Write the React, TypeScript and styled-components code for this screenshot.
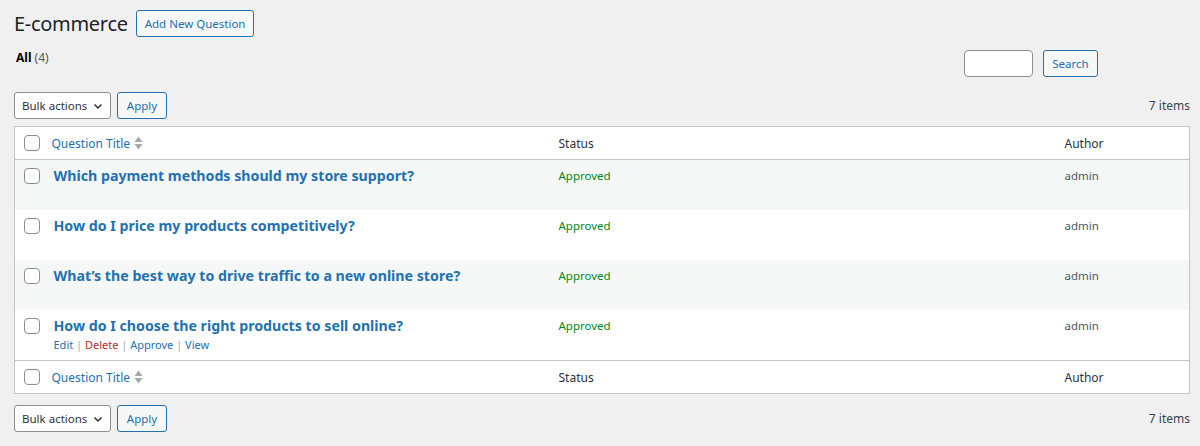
import styled, { createGlobalStyle } from 'styled-components'

const GlobalStyle = createGlobalStyle`
  html, body {
    margin: 0;
    padding: 0;
    background: #f0f0f1;
  }
  body {
    font-family: 'Noto Sans', 'Open Sans', sans-serif;
    font-size: 13px;
    color: #3c434a;
  }
`

const Page = styled.div`
  padding: 0 10px 0 14px;
  width: 1176px;
`

const TitleRow = styled.div`
  display: flex;
  align-items: center;
  gap: 8px;
  height: 27px;
  margin-top: 10px;
`

const PageTitle = styled.h1`
  margin: 0;
  font-size: 20px;
  font-weight: 400;
  color: #1d2327;
  line-height: 27px;
  letter-spacing: -0.3px;
`

const Button = styled.button<{ $width?: number }>`
  height: 27px;
  padding: 0 8px;
  border: 1px solid #2271b1;
  border-radius: 3px;
  background: #f6f7f7;
  color: #2271b1;
  font-family: inherit;
  font-size: 11.5px;
  line-height: 25px;
  white-space: nowrap;
  cursor: pointer;
  width: ${(p) => (p.$width ? `${p.$width}px` : 'auto')};
`

const FilterRow = styled.div`
  display: flex;
  align-items: flex-start;
  justify-content: space-between;
  margin-top: 13px;
  height: 27px;
`

const Subsub = styled.div`
  font-size: 12px;
  line-height: 16px;
  padding-left: 2px;
  color: #50575e;

  b {
    color: #000;
    font-weight: 700;
  }
`

const SearchBox = styled.div`
  display: flex;
  gap: 10px;
  margin-right: 92px;
`

const SearchInput = styled.input`
  width: 69px;
  height: 27px;
  box-sizing: border-box;
  border: 1px solid #8c8f94;
  border-radius: 4px;
  background: #fff;
`

const TableNav = styled.div<{ $top?: boolean }>`
  display: flex;
  align-items: center;
  gap: 6px;
  height: 27px;
  margin: ${(p) => (p.$top ? '15px 0 7px' : '11px 0 0')};
`

const Select = styled.div`
  width: 97px;
  height: 27px;
  box-sizing: border-box;
  border: 1px solid #8c8f94;
  border-radius: 3px;
  background: #fff;
  display: flex;
  align-items: center;
  justify-content: space-between;
  padding: 0 6px 0 7px;
  font-size: 11.5px;
  white-space: nowrap;
  color: #2c3338;
`

const Count = styled.span`
  margin-left: auto;
  font-size: 12px;
  color: #3c434a;
`

const Table = styled.table`
  width: 1176px;
  border-collapse: collapse;
  table-layout: fixed;
  background: #fff;
  border: 1px solid #c3c4c7;
`

const HeadCell = styled.th<{ $pad?: number }>`
  text-align: left;
  font-weight: 400;
  font-size: 12px;
  color: #2c3338;
  height: 33px;
  box-sizing: border-box;
  padding: 0 10px 0 ${(p) => p.$pad ?? 10}px;
  vertical-align: middle;
`

const HeadRow = styled.tr<{ $foot?: boolean }>`
  border-${(p) => (p.$foot ? 'top' : 'bottom')}: 1px solid #c3c4c7;
`

const BodyRow = styled.tr<{ $striped: boolean }>`
  background: ${(p) => (p.$striped ? '#f6f7f7' : '#fff')};
`

const Cell = styled.td<{ $pad?: number }>`
  height: 50px;
  box-sizing: border-box;
  padding: 6px 10px 8px ${(p) => p.$pad ?? 10}px;
  vertical-align: top;
  font-size: 12px;
`

const Check = styled.span`
  display: block;
  width: 16px;
  height: 16px;
  box-sizing: border-box;
  border: 1px solid #8c8f94;
  border-radius: 4px;
  background: #fff;
`

const CheckCell = styled(Cell)`
  padding-top: 8px;
`

const SortLink = styled.span`
  display: inline-flex;
  align-items: center;
  gap: 4px;
  color: #2271b1;
`

const RowTitle = styled.a`
  display: block;
  font-weight: 700;
  font-size: 14.2px;
  line-height: 20px;
  color: #2271b1;
  text-decoration: none;
  white-space: nowrap;
`

const RowActions = styled.div<{ $visible: boolean }>`
  visibility: ${(p) => (p.$visible ? 'visible' : 'hidden')};
  margin-top: 2px;
  font-size: 11px;
  line-height: 14px;
  color: #a7aaad;
  white-space: nowrap;

  a {
    color: #2271b1;
    text-decoration: none;
  }
  a.delete {
    color: #b32d2e;
  }
`

const CellText = styled.div<{ $color: string }>`
  line-height: 20px;
  font-size: 11.5px;
  color: ${(p) => p.$color};
`

const SortIcon = () => (
  <svg width="9" height="14" viewBox="0 0 9 14" fill="#a7aaad">
    <path d="M4.5 0.5 L8.5 6 H0.5 Z" />
    <path d="M4.5 13.5 L8.5 8 H0.5 Z" />
  </svg>
)

const Chevron = () => (
  <svg width="12" height="12" viewBox="0 0 12 12" fill="none" stroke="#2c3338" strokeWidth="1.5">
    <path d="M2.5 4.5 L6 8 L9.5 4.5" />
  </svg>
)

const questions = [
  'Which payment methods should my store support?',
  'How do I price my products competitively?',
  'What\u2019s the best way to drive traffic to a new online store?',
  'How do I choose the right products to sell online?',
]

function Nav({ top }: { top?: boolean }) {
  return (
    <TableNav $top={top}>
      <Select>
        Bulk actions <Chevron />
      </Select>
      <Button $width={50}>Apply</Button>
      <Count>7 items</Count>
    </TableNav>
  )
}

function HeaderRow({ foot }: { foot?: boolean }) {
  return (
    <HeadRow $foot={foot}>
      <HeadCell $pad={9}>
        <Check />
      </HeadCell>
      <HeadCell $pad={7}>
        <SortLink>
          Question Title <SortIcon />
        </SortLink>
      </HeadCell>
      <HeadCell>Status</HeadCell>
      <HeadCell>Author</HeadCell>
    </HeadRow>
  )
}

export default function App() {
  return (
    <>
      <GlobalStyle />
      <Page>
        <TitleRow>
          <PageTitle>E-commerce</PageTitle>
          <Button>Add New Question</Button>
        </TitleRow>
        <FilterRow>
          <Subsub>
            <b>All</b> (4)
          </Subsub>
          <SearchBox>
            <SearchInput />
            <Button $width={55}>Search</Button>
          </SearchBox>
        </FilterRow>
        <Nav top />
        <Table>
          <colgroup>
            <col style={{ width: 30 }} />
            <col style={{ width: 504 }} />
            <col style={{ width: 506 }} />
            <col />
          </colgroup>
          <thead>
            <HeaderRow />
          </thead>
          <tbody>
            {questions.map((q, i) => (
              <BodyRow key={q} $striped={i % 2 === 0}>
                <CheckCell $pad={9}>
                  <Check />
                </CheckCell>
                <Cell $pad={9}>
                  <RowTitle>{q}</RowTitle>
                  <RowActions $visible={i === questions.length - 1}>
                    <a>Edit</a> | <a className="delete">Delete</a> | <a>Approve</a> | <a>View</a>
                  </RowActions>
                </Cell>
                <Cell>
                  <CellText $color="#008a20">Approved</CellText>
                </Cell>
                <Cell>
                  <CellText $color="#50575e">admin</CellText>
                </Cell>
              </BodyRow>
            ))}
          </tbody>
          <tfoot>
            <HeaderRow foot />
          </tfoot>
        </Table>
        <Nav />
      </Page>
    </>
  )
}
